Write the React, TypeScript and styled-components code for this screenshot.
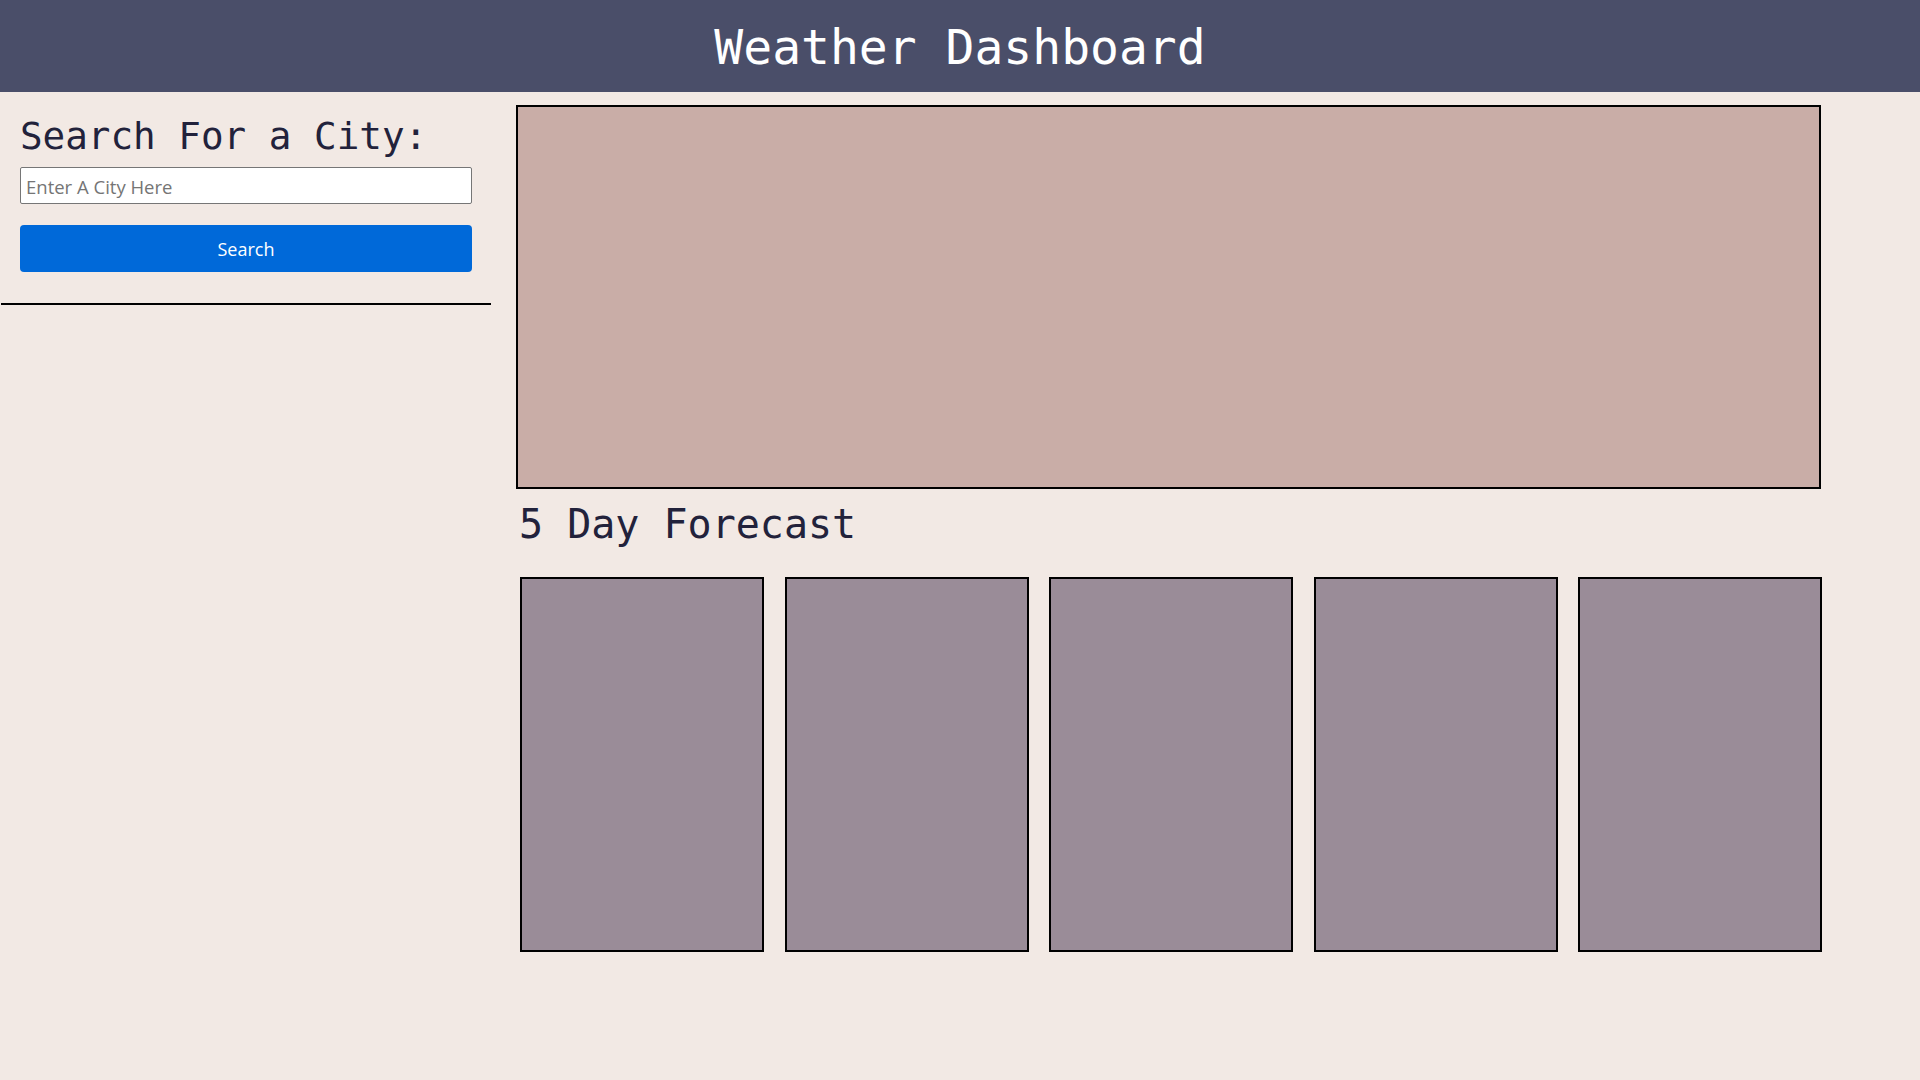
import React from "react";
import styled, { createGlobalStyle } from "styled-components";

const GlobalStyle = createGlobalStyle`
  html, body {
    margin: 0;
    padding: 0;
    background: #f2e9e4;
  }
  body {
    font-family: "DejaVu Sans Mono", "Liberation Mono", monospace;
    color: #22223b;
  }
  * { box-sizing: border-box; }
`;

const Header = styled.header`
  height: 92px;
  background: #4a4e69;
  display: flex;
  align-items: center;
  justify-content: center;
  padding-top: 3px;
`;

const Title = styled.h1`
  margin: 0;
  font-family: "DejaVu Sans Mono", "Liberation Mono", monospace;
  font-weight: 400;
  font-size: 48px;
  line-height: 1.2;
  color: #ffffff;
`;

const Page = styled.div`
  display: flex;
  align-items: flex-start;
  min-height: 988px;
`;

const Sidebar = styled.aside`
  width: 492px;
  flex: none;
  display: flex;
  flex-direction: column;
`;

const SearchForm = styled.form`
  display: flex;
  flex-direction: column;
  padding: 22px 20px 0 20px;
`;

const SearchHeading = styled.h2`
  margin: 0 0 8px 0;
  font-family: "DejaVu Sans Mono", "Liberation Mono", monospace;
  font-weight: 400;
  font-size: 37.6px;
  line-height: 1.2;
  color: #22223b;
`;

const CityInput = styled.input`
  height: 37px;
  width: 100%;
  padding: 1px 5px 0 5px;
  border: 1px solid #767676;
  border-radius: 2px;
  background: #ffffff;
  font-family: "Open Sans", "Noto Sans", sans-serif;
  font-size: 18.5px;
  color: #22223b;
  &::placeholder {
    color: #757575;
  }
`;

const SearchButton = styled.button`
  margin-top: 21px;
  height: 47px;
  width: 100%;
  border: none;
  border-radius: 4px;
  background: #0069d9;
  color: #ffffff;
  font-family: "Open Sans", "Noto Sans", sans-serif;
  font-size: 18px;
  cursor: pointer;
  padding: 0;
`;

const Divider = styled.hr`
  margin: 31px 1px 0 1px;
  border: none;
  border-top: 2px solid #000000;
  height: 0;
`;

const Main = styled.main`
  margin-left: 24px;
  padding-top: 13px;
  width: 1306px;
  display: flex;
  flex-direction: column;
`;

const CurrentWeather = styled.section`
  width: 1305px;
  height: 384px;
  background: #c9ada7;
  border: 2px solid #000000;
`;

const ForecastHeading = styled.h2`
  margin: 11px 0 0 3px;
  font-family: "DejaVu Sans Mono", "Liberation Mono", monospace;
  font-weight: 400;
  font-size: 40px;
  line-height: 1.2;
  color: #22223b;
`;

const ForecastRow = styled.div`
  margin: 29px 0 0 4px;
  width: 1302px;
  display: grid;
  grid-template-columns: repeat(5, 1fr);
  column-gap: 20.5px;
`;

const DayCard = styled.div`
  height: 375px;
  background: #9a8c98;
  border: 2px solid #000000;
`;

const days = [1, 2, 3, 4, 5];

export default function App() {
  return (
    <>
      <GlobalStyle />
      <Header>
        <Title>Weather Dashboard</Title>
      </Header>
      <Page>
        <Sidebar>
          <SearchForm onSubmit={(e) => e.preventDefault()}>
            <SearchHeading>Search For a City:</SearchHeading>
            <CityInput type="text" placeholder="Enter A City Here" />
            <SearchButton type="submit">Search</SearchButton>
          </SearchForm>
          <Divider />
        </Sidebar>
        <Main>
          <CurrentWeather />
          <ForecastHeading>5 Day Forecast</ForecastHeading>
          <ForecastRow>
            {days.map((d) => (
              <DayCard key={d} />
            ))}
          </ForecastRow>
        </Main>
      </Page>
    </>
  );
}
